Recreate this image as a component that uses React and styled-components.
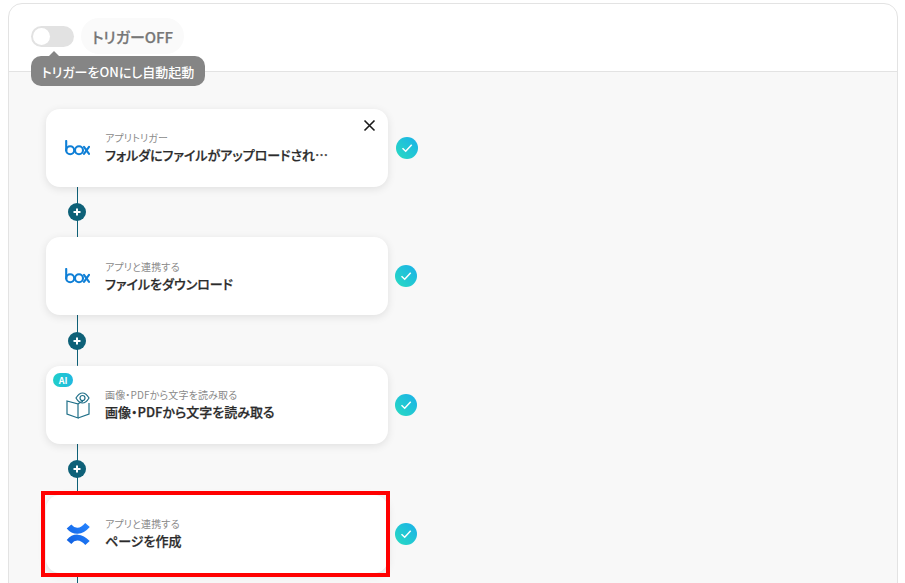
import React from "react";
import styled, { createGlobalStyle } from "styled-components";

const GlobalStyle = createGlobalStyle`
  html, body {
    margin: 0;
    padding: 0;
    height: 100%;
    overflow: hidden;
    background: #fff;
    font-family: "Noto Sans CJK JP", "Noto Sans", sans-serif;
    font-feature-settings: "palt";
  }
`;

const Page = styled.div`
  height: 583px;
  padding: 3px 7px 0 8px;
  box-sizing: border-box;
  overflow: hidden;
`;

const Panel = styled.div`
  height: 600px;
  border: 1px solid #e3e3e3;
  border-radius: 14px 14px 0 0;
  position: relative;
  overflow: hidden;
`;

const Header = styled.div`
  height: 68px;
  box-sizing: border-box;
  border-bottom: 1px solid #e3e3e3;
  display: flex;
  align-items: flex-start;
  padding: 14px 0 0 22px;
  gap: 7px;
`;

const Toggle = styled.div`
  width: 43px;
  height: 21px;
  margin-top: 8px;
  border-radius: 11px;
  background: #e2e2e2;
  display: flex;
  align-items: center;
  padding-left: 2px;
  box-sizing: border-box;

  &::before {
    content: "";
    width: 17px;
    height: 17px;
    border-radius: 50%;
    background: #fff;
  }
`;

const StatusPill = styled.div`
  height: 36px;
  width: 103px;
  border-radius: 18px;
  background: #fafafa;
  color: #777;
  font-size: 15px;
  font-weight: 500;
  -webkit-text-stroke: 0.25px #777;
  display: flex;
  align-items: center;
  justify-content: center;
`;

const Tooltip = styled.div`
  position: absolute;
  left: 22px;
  top: 52px;
  width: 174px;
  height: 30px;
  border-radius: 10px;
  background: #858585;
  color: #fff;
  font-size: 13px;
  font-weight: 500;
  display: flex;
  align-items: center;
  justify-content: center;
  white-space: nowrap;

  &::before {
    content: "";
    position: absolute;
    left: 17px;
    top: -5px;
    border-left: 6px solid transparent;
    border-right: 6px solid transparent;
    border-bottom: 6px solid #858585;
  }
`;

const Canvas = styled.div`
  background: #f8f8f8;
  height: 540px;
  padding: 36.7px 0 0 36.5px;
`;

const Step = styled.div`
  display: flex;
  align-items: center;
  gap: ${(p) => p.$gap}px;
`;

const Card = styled.div`
  position: relative;
  width: 342.5px;
  height: 78px;
  box-sizing: border-box;
  background: #fff;
  border-radius: 14px;
  box-shadow: 0 2px 8px rgba(0, 0, 0, 0.1);
  display: flex;
  align-items: center;
  padding-left: 17.5px;
`;

const Highlight = styled.div`
  position: absolute;
  inset: -4px -2px -4px -5px;
  border: 4px solid #f00;
  pointer-events: none;
`;

const IconSlot = styled.div`
  width: 29px;
  height: 32px;
  flex: none;
  display: flex;
  align-items: center;
  justify-content: center;
`;

const Labels = styled.div`
  margin-left: 13px;
  margin-top: -1.5px;
  display: flex;
  flex-direction: column;
`;

const SmallLabel = styled.div`
  font-size: 10px;
  line-height: 15px;
  letter-spacing: 0.15px;
  color: #8a8a8a;
  white-space: nowrap;
`;

const Title = styled.div`
  font-size: 13px;
  line-height: 19px;
  font-weight: 500;
  -webkit-text-stroke: 0.25px #2b2b2b;
  color: #2b2b2b;
  white-space: nowrap;
`;

const CloseButton = styled.button`
  position: absolute;
  top: 9px;
  right: 11px;
  width: 15px;
  height: 15px;
  padding: 0;
  border: 0;
  background: none;
  display: flex;
`;

const AiBadge = styled.div`
  position: absolute;
  left: 7.5px;
  top: 7px;
  width: 20px;
  height: 14px;
  border-radius: 7px;
  background: linear-gradient(90deg, #20cfc9, #20b8e0);
  color: #fff;
  font-size: 9px;
  font-weight: 700;
  display: flex;
  align-items: center;
  justify-content: center;
`;

const Check = styled.div`
  width: 22px;
  height: 22px;
  border-radius: 50%;
  background: linear-gradient(45deg, #28dcc0, #1ab0ea);
  display: flex;
  align-items: center;
  justify-content: center;
`;

const Connector = styled.div`
  width: 18px;
  height: 50.67px;
  margin-left: 22.5px;
  display: flex;
  align-items: center;
  justify-content: center;
  background: linear-gradient(#0e6178, #0e6178) center / 1px 100% no-repeat;
`;

const PlusDot = styled.div`
  width: 18px;
  height: 18px;
  border-radius: 50%;
  background: #0e6178;
  display: flex;
  align-items: center;
  justify-content: center;
`;

const BoxLogo = () => (
  <svg width="25" height="16" viewBox="0 0 25 16" fill="none" stroke="#0f7fd6" strokeWidth="2.1">
    <path d="M1.2 1v9.5" strokeLinecap="round" />
    <circle cx="5.2" cy="10.3" r="4" />
    <circle cx="14" cy="10.3" r="4" />
    <path d="M19 6.8l5 7M24 6.8l-5 7" strokeLinecap="round" />
  </svg>
);

const BookEye = () => (
  <svg width="25" height="27" viewBox="0 0 25 27" fill="none" stroke="#1f6f88" strokeWidth="1.2">
    <path d="M2 9l11 3v14L2 22z" />
    <path d="M13 12c1.500-1.300 3-2.200 5-2.600M13 26l11-4V11" />
    <path d="M11 6c2-3.400 4.300-5 6.500-5s4.500 1.600 6.500 5c-2 3.400-4.300 5-6.500 5S13 9.400 11 6z" />
    <circle cx="17.500" cy="6" r="2.500" />
  </svg>
);

const ConfluenceLogo = () => (
  <svg width="24" height="24" viewBox="0 0 24 24" fill="none" strokeWidth="6">
    <defs>
      <linearGradient id="conf" gradientUnits="userSpaceOnUse" x1="2" y1="22" x2="22" y2="2">
        <stop offset="0" stopColor="#0f5fe0" />
        <stop offset="1" stopColor="#2684ff" />
      </linearGradient>
    </defs>
    <path stroke="url(#conf)" d="M3 4.500C8 10.500 15 10.500 21.500 3" />
    <path stroke="url(#conf)" d="M3 20C8 14 15 14 21.500 21" />
  </svg>
);

const steps = [
  { icon: <BoxLogo />, small: "アプリトリガー", title: "フォルダにファイルがアップロードされ…", closable: true, gap: 8 },
  { icon: <BoxLogo />, small: "アプリと連携する", title: "ファイルをダウンロード", gap: 7 },
  { icon: <BookEye />, small: "画像・PDFから文字を読み取る", title: "画像・PDFから文字を読み取る", ai: true, gap: 7 },
  { icon: <ConfluenceLogo />, small: "アプリと連携する", title: "ページを作成", selected: true, gap: 7 },
];

export default function App() {
  return (
    <>
      <GlobalStyle />
      <Page>
        <Panel>
          <Header>
            <Toggle />
            <StatusPill>トリガーOFF</StatusPill>
          </Header>
          <Tooltip>トリガーをONにし自動起動</Tooltip>
          <Canvas>
            {steps.map((step) => (
              <React.Fragment key={step.title + step.small}>
                <Step $gap={step.gap}>
                  <Card>
                    {step.ai && <AiBadge>AI</AiBadge>}
                    <IconSlot>{step.icon}</IconSlot>
                    <Labels>
                      <SmallLabel>{step.small}</SmallLabel>
                      <Title>{step.title}</Title>
                    </Labels>
                    {step.closable && (
                      <CloseButton>
                        <svg width="15" height="15" viewBox="0 0 15 15" stroke="#1a1a1a" strokeWidth="1.6">
                          <path d="M2.500 2.500l10 10M12.500 2.500l-10 10" />
                        </svg>
                      </CloseButton>
                    )}
                    {step.selected && <Highlight />}
                  </Card>
                  <Check>
                    <svg width="12" height="10" viewBox="0 0 12 10" fill="none" stroke="#fff" strokeWidth="1.5">
                      <path d="M1.500 5.200l3.200 3 6-6.500" />
                    </svg>
                  </Check>
                </Step>
                <Connector>
                  <PlusDot>
                    <svg width="8" height="8" viewBox="0 0 8 8" stroke="#fff" strokeWidth="2">
                      <path d="M4 .5v7M.5 4h7" />
                    </svg>
                  </PlusDot>
                </Connector>
              </React.Fragment>
            ))}
          </Canvas>
        </Panel>
      </Page>
    </>
  );
}
